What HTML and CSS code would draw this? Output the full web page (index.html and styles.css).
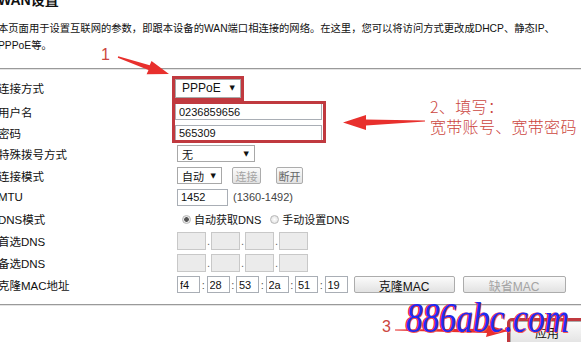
FILE: index.html
```html
<!DOCTYPE html>
<html lang="zh-CN">
<head>
  <meta charset="UTF-8">
  <title>WAN设置</title>
  <link rel="stylesheet" href="styles.css">
</head>
<body>
  <div class="page">
    <h1 class="title">WAN设置</h1>
    <p class="desc">本页面用于设置互联网的参数，即跟本设备的WAN端口相连接的网络。在这里，您可以将访问方式更改成DHCP、静态IP、<br>PPPoE等。</p>
    <div class="rule"></div>

    <div class="form">
      <div class="label">连接方式</div>
      <div class="ctrl tight"><span class="select sel-type">PPPoE<i class="caret">▼</i></span></div>

      <div class="label">用户名</div>
      <div class="ctrl tight"><input class="field wide" value="0236859656"></div>

      <div class="label">密码</div>
      <div class="ctrl tight"><input class="field wide" value="565309"></div>

      <div class="label">特殊拨号方式</div>
      <div class="ctrl"><span class="select sel-none">无<i class="caret">▼</i></span></div>

      <div class="label">连接模式</div>
      <div class="ctrl">
        <span class="select sel-auto">自动<i class="caret">▼</i></span>
        <button class="btn off connect">连接</button>
        <button class="btn dim hangup">断开</button>
      </div>

      <div class="label">MTU</div>
      <div class="ctrl">
        <input class="field mtu" value="1452">
        <span class="hint">(1360-1492)</span>
      </div>

      <div class="label">DNS模式</div>
      <div class="ctrl radios">
        <span class="radio on"></span><span class="radio-text">自动获取DNS</span>
        <span class="radio"></span><span class="radio-text">手动设置DNS</span>
      </div>

      <div class="label">首选DNS</div>
      <div class="ctrl">
        <span class="ip-box"></span><span class="sep">.</span><span class="ip-box"></span><span class="sep">.</span><span class="ip-box"></span><span class="sep">.</span><span class="ip-box"></span>
      </div>

      <div class="label">备选DNS</div>
      <div class="ctrl">
        <span class="ip-box"></span><span class="sep">.</span><span class="ip-box"></span><span class="sep">.</span><span class="ip-box"></span><span class="sep">.</span><span class="ip-box"></span>
      </div>

      <div class="label">克隆MAC地址</div>
      <div class="ctrl">
        <input class="field mac" value="f4"><span class="colon">:</span>
        <input class="field mac" value="28"><span class="colon">:</span>
        <input class="field mac" value="53"><span class="colon">:</span>
        <input class="field mac" value="2a"><span class="colon">:</span>
        <input class="field mac" value="51"><span class="colon">:</span>
        <input class="field mac" value="19">
        <button class="btn clone">克隆MAC</button>
        <button class="btn off reset">缺省MAC</button>
      </div>
    </div>

    <div class="rule rule-bottom"></div>
    <div class="actions">
      <button class="btn apply">应用</button>
    </div>
  </div>

  <!-- annotations drawn over the screenshot -->
  <div class="mark-box"></div>
  <svg class="arrows" width="581" height="342" viewBox="0 0 581 342">
    <polygon points="118.2,56.2 149.7,65.2 151.5,60.9 169,74 146.6,74.3 148.5,70 117.8,57.8" />
    <polygon points="425,120.5 366,119.4 366,115 343,122.5 366,130 366,125.6 425,121.6" />
    <polygon points="395,329.4 487,328.8 486,324.5 508,331 486,337 487,333 395,330.6" />
  </svg>
  <span class="note note-1">1</span>
  <div class="note note-2">2、填写：<br>宽带账号、宽带密码</div>
  <span class="note note-3">3</span>
  <div class="watermark">886abc.com</div>
</body>
</html>
```

FILE: styles.css
```css
html,
body {
  overflow: hidden;
}

body {
  margin: 0;
  font-family: "Liberation Sans", "Noto Sans CJK SC", sans-serif;
  font-size: 11px;
  color: #111;
  background: #fff;
}

.page {
  margin-left: -2px;
}

.title {
  margin: -9px 0 0;
  font-size: 14px;
  line-height: 18px;
  font-weight: bold;
}

.desc {
  margin: 11px 0 0;
  font-size: 10.3px;
  line-height: 17px;
}

.rule {
  margin-top: 14px;
  border-top: 1px solid #9a9a9a;
  border-bottom: 1px solid #e4e4e4;
}

.rule-bottom {
  margin-top: 8px;
}

.form {
  display: grid;
  grid-template-columns: 179px auto;
  grid-template-rows: 24px 23px 20px repeat(7, 21.8px);
  align-items: center;
  padding-top: 6px;
}

.label {
  white-space: nowrap;
  font-size: 11.5px;
}

.ctrl {
  display: flex;
  align-items: center;
  white-space: nowrap;
}

.tight {
  margin-left: -2px;
}

/* fake selects */
.select {
  display: inline-flex;
  align-items: center;
  justify-content: space-between;
  box-sizing: border-box;
  height: 17px;
  padding: 0 5px 0 4px;
  border: 1px solid #a8a8a8;
  background: #fff;
}

.caret {
  font-style: normal;
  font-size: 7px;
  font-family: "DejaVu Sans", sans-serif;
}

.sel-type {
  width: 66px;
  height: 19px;
  padding-left: 6px;
  font-size: 12px;
  outline: 3px solid #c0393f;
}

.sel-none {
  width: 78px;
}

.sel-auto {
  width: 45px;
}

/* inputs */
.field {
  box-sizing: border-box;
  height: 17px;
  margin: 0;
  padding: 0 3px;
  border: 1px solid #a9aeb5;
  font: inherit;
  color: #111;
  background: #fff;
}

.wide {
  width: 147px;
}

.mtu {
  width: 51px;
}

.hint {
  margin-left: 5px;
  color: #444;
}

.mac {
  width: 23px;
  padding: 0 2px;
}

.colon {
  width: 6.5px;
  text-align: center;
  color: #555;
}

/* buttons */
.btn {
  box-sizing: border-box;
  height: 17px;
  margin: 0;
  padding: 0;
  border: 1px solid #acacac;
  border-radius: 2px;
  background: linear-gradient(#fbfbfb, #e2e2e2);
  font: inherit;
  color: #111;
  white-space: nowrap;
}

.btn.off {
  color: #a3a3a3;
}

.btn.dim {
  color: #666;
}

.connect {
  width: 29px;
  margin-left: 10px;
}

.hangup {
  width: 27px;
  margin-left: 15px;
}

.clone {
  width: 101px;
  margin-left: 6px;
  font-size: 12px;
}

.reset {
  width: 103px;
  margin-left: 8px;
  font-size: 12px;
}

/* radios */
.radios {
  padding-left: 5px;
}

.radio {
  box-sizing: border-box;
  width: 9px;
  height: 9px;
  margin-right: 3px;
  border: 1px solid #b8b8b8;
  border-radius: 50%;
  background: radial-gradient(circle, #fff, #dcdcdc);
}

.radio.on {
  background: radial-gradient(circle, #555 0 2px, #e8e8e8 2.6px);
}

.radio-text {
  margin-right: 9px;
}

/* disabled ip boxes */
.ip-box {
  box-sizing: border-box;
  width: 29px;
  height: 18px;
  border: 1px solid #c8c8c8;
  background: #ebebeb;
}

.sep {
  width: 5px;
  text-align: center;
  line-height: 22px;
  color: #666;
}

.actions {
  display: flex;
  justify-content: flex-end;
  margin-top: 15px;
}

.apply {
  width: 82px;
  height: 24px;
  margin-right: -11px;
  padding-right: 8px;
  outline: 3px solid #c0393f;
  font-size: 12px;
}

/* annotations */
.mark-box {
  position: absolute;
  left: 172px;
  top: 101px;
  width: 154px;
  height: 42px;
  box-sizing: border-box;
  border: 3px solid #c0393f;
}

.arrows {
  position: absolute;
  left: 0;
  top: 0;
  fill: #e8302d;
}

.note {
  position: absolute;
  color: #cc4640;
  font-family: "Noto Sans CJK SC", sans-serif;
  font-weight: 300;
}

.note-1 {
  left: 101px;
  top: 46px;
  font-size: 16px;
  font-family: "Liberation Sans", sans-serif;
}

.note-2 {
  left: 430px;
  top: 96px;
  font-size: 16px;
  line-height: 20px;
  letter-spacing: 0.3px;
}

.note-3 {
  left: 382px;
  top: 318px;
  font-size: 16px;
  font-family: "Liberation Sans", sans-serif;
}

.watermark {
  position: absolute;
  left: 406px;
  top: 294px;
  font-family: "Liberation Serif", serif;
  font-style: italic;
  font-size: 43px;
  line-height: 48px;
  color: #1f2cf0;
  text-shadow: -1.5px 0 #f02a2a, 1px 1px 0 #f45555;
  transform: scaleX(0.78);
  transform-origin: left center;
}
```
